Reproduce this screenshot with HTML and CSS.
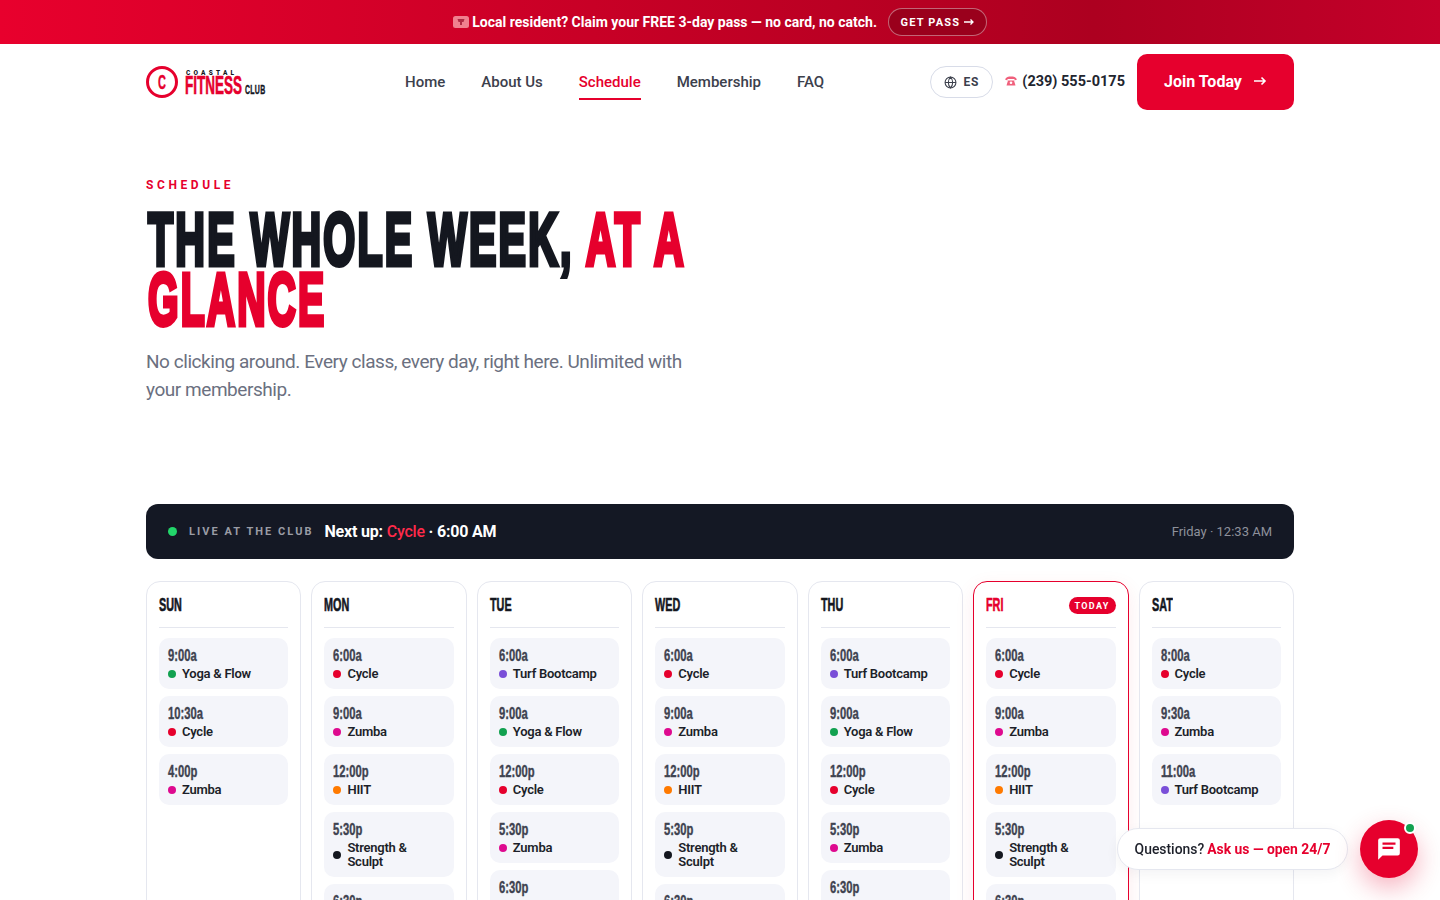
FILE: index.html
```html
<!DOCTYPE html>
<html lang="en">
<head>
<meta charset="utf-8">
<title>Schedule · Coastal Fitness Club</title>
<link rel="stylesheet" href="styles.css">
</head>
<body>
<div class="page">
  <div class="topbar">
    <svg class="ticket" width="16" height="12" viewBox="0 0 16 12"><rect width="16" height="12" rx="2.5" fill="#f0808f"/><path d="M4.500 3h7l-1 3h-5zM7 6h2v3H7z" fill="#b02a44"/></svg>
    <span class="topbar-text">Local resident? Claim your FREE 3-day pass — no card, no catch.</span>
    <a class="pass-btn">GET PASS <svg width="10" height="8" viewBox="0 0 10 8" fill="none" stroke="#fff" stroke-width="1.300"><path d="M0 4h9M6.500 1.500 9 4 6.500 6.500"/></svg></a>
  </div>
  <header class="header">
    <a class="logo">
      <span class="logo-mark"><span class="cond logo-c">C</span></span>
      <span class="logo-words">
        <span class="logo-coastal">COASTAL</span>
        <span class="logo-row"><span class="cond logo-fitness">FITNESS</span><span class="cond logo-club">CLUB</span></span>
      </span>
    </a>
    <nav class="nav">
      <a>Home</a><a>About Us</a><a class="active">Schedule</a><a>Membership</a><a>FAQ</a>
    </nav>
    <div class="header-right">
      <a class="lang">
        <svg width="13" height="13" viewBox="0 0 24 24" fill="none" stroke="#3c404c" stroke-width="2"><circle cx="12" cy="12" r="10"/><path d="M2 12h20M12 2c3 3 4 6.500 4 10s-1 7-4 10c-3-3-4-6.500-4-10s1-7 4-10z"/></svg>
        ES
      </a>
      <a class="phone">
        <svg width="12" height="10" viewBox="0 0 12 10"><path d="M0 3.500C1 1 3.500 .5 6 .5s5 .5 6 3L9.500 4.500V3h-7v1.500zM3 4.500h6L10.500 9.500h-9z" fill="#f0607c"/><circle cx="6" cy="6.700" r="1.300" fill="#fff"/></svg>
        (239) 555-0175
      </a>
      <a class="join">Join Today <svg width="14" height="10" viewBox="0 0 14 10" fill="none" stroke="#fff" stroke-width="1.600"><path d="M1 5h11M8.500 1.500 12 5 8.500 8.500"/></svg></a>
    </div>
  </header>
  <main class="main">
    <section class="hero">
      <p class="eyebrow">SCHEDULE</p>
      <h1 class="title"><span class="title-line">THE WHOLE WEEK, <em>AT A</em></span><span class="title-line title-short"><em>GLANCE</em></span></h1>
      <p class="lead">No clicking around. Every class, every day, right here. Unlimited with your membership.</p>
    </section>
    <section class="live">
      <span class="live-dot"></span>
      <span class="live-label">LIVE AT THE CLUB</span>
      <span class="live-next">Next up: <b>Cycle</b> · 6:00 AM</span>
      <span class="live-time">Friday · 12:33 AM</span>
    </section>
    <section class="week">
      <article class="day">
        <h2 class="day-head"><span class="cond day-name">SUN</span></h2>
        <div class="slot"><span class="cond time">9:00a</span><span class="cls"><i class="dot green"></i>Yoga &amp; Flow</span></div>
        <div class="slot"><span class="cond time">10:30a</span><span class="cls"><i class="dot red"></i>Cycle</span></div>
        <div class="slot"><span class="cond time">4:00p</span><span class="cls"><i class="dot pink"></i>Zumba</span></div>
      </article>
      <article class="day">
        <h2 class="day-head"><span class="cond day-name">MON</span></h2>
        <div class="slot"><span class="cond time">6:00a</span><span class="cls"><i class="dot red"></i>Cycle</span></div>
        <div class="slot"><span class="cond time">9:00a</span><span class="cls"><i class="dot pink"></i>Zumba</span></div>
        <div class="slot"><span class="cond time">12:00p</span><span class="cls"><i class="dot orange"></i>HIIT</span></div>
        <div class="slot"><span class="cond time">5:30p</span><span class="cls"><i class="dot ink"></i>Strength &amp; Sculpt</span></div>
        <div class="slot"><span class="cond time">6:30p</span><span class="cls"><i class="dot red"></i>Cycle</span></div>
      </article>
      <article class="day">
        <h2 class="day-head"><span class="cond day-name">TUE</span></h2>
        <div class="slot"><span class="cond time">6:00a</span><span class="cls"><i class="dot purple"></i>Turf Bootcamp</span></div>
        <div class="slot"><span class="cond time">9:00a</span><span class="cls"><i class="dot green"></i>Yoga &amp; Flow</span></div>
        <div class="slot"><span class="cond time">12:00p</span><span class="cls"><i class="dot red"></i>Cycle</span></div>
        <div class="slot"><span class="cond time">5:30p</span><span class="cls"><i class="dot pink"></i>Zumba</span></div>
        <div class="slot"><span class="cond time">6:30p</span><span class="cls"><i class="dot orange"></i>HIIT</span></div>
      </article>
      <article class="day">
        <h2 class="day-head"><span class="cond day-name">WED</span></h2>
        <div class="slot"><span class="cond time">6:00a</span><span class="cls"><i class="dot red"></i>Cycle</span></div>
        <div class="slot"><span class="cond time">9:00a</span><span class="cls"><i class="dot pink"></i>Zumba</span></div>
        <div class="slot"><span class="cond time">12:00p</span><span class="cls"><i class="dot orange"></i>HIIT</span></div>
        <div class="slot"><span class="cond time">5:30p</span><span class="cls"><i class="dot ink"></i>Strength &amp; Sculpt</span></div>
        <div class="slot"><span class="cond time">6:30p</span><span class="cls"><i class="dot red"></i>Cycle</span></div>
      </article>
      <article class="day">
        <h2 class="day-head"><span class="cond day-name">THU</span></h2>
        <div class="slot"><span class="cond time">6:00a</span><span class="cls"><i class="dot purple"></i>Turf Bootcamp</span></div>
        <div class="slot"><span class="cond time">9:00a</span><span class="cls"><i class="dot green"></i>Yoga &amp; Flow</span></div>
        <div class="slot"><span class="cond time">12:00p</span><span class="cls"><i class="dot red"></i>Cycle</span></div>
        <div class="slot"><span class="cond time">5:30p</span><span class="cls"><i class="dot pink"></i>Zumba</span></div>
        <div class="slot"><span class="cond time">6:30p</span><span class="cls"><i class="dot orange"></i>HIIT</span></div>
      </article>
      <article class="day today">
        <h2 class="day-head"><span class="cond day-name">FRI</span><span class="badge">TODAY</span></h2>
        <div class="slot"><span class="cond time">6:00a</span><span class="cls"><i class="dot red"></i>Cycle</span></div>
        <div class="slot"><span class="cond time">9:00a</span><span class="cls"><i class="dot pink"></i>Zumba</span></div>
        <div class="slot"><span class="cond time">12:00p</span><span class="cls"><i class="dot orange"></i>HIIT</span></div>
        <div class="slot"><span class="cond time">5:30p</span><span class="cls"><i class="dot ink"></i>Strength &amp; Sculpt</span></div>
        <div class="slot"><span class="cond time">6:30p</span><span class="cls"><i class="dot red"></i>Cycle</span></div>
      </article>
      <article class="day">
        <h2 class="day-head"><span class="cond day-name">SAT</span></h2>
        <div class="slot"><span class="cond time">8:00a</span><span class="cls"><i class="dot red"></i>Cycle</span></div>
        <div class="slot"><span class="cond time">9:30a</span><span class="cls"><i class="dot pink"></i>Zumba</span></div>
        <div class="slot"><span class="cond time">11:00a</span><span class="cls"><i class="dot purple"></i>Turf Bootcamp</span></div>
      </article>
    </section>
  </main>
</div>
<a class="chat-bubble">Questions? <b>Ask us — open 24/7</b></a>
<a class="chat-btn">
  <svg width="26" height="26" viewBox="0 0 24 24" fill="#fff"><path d="M20 2H4a2 2 0 0 0-2 2v18l4-4h14a2 2 0 0 0 2-2V4a2 2 0 0 0-2-2zM6 6h12v2H6zm0 4h10v2H6z" fill-rule="evenodd"/></svg>
  <span class="chat-online"></span>
</a>
</body>
</html>
```
FILE: styles.css
```css
* { box-sizing: border-box; }
html, body { margin: 0; padding: 0; background: #fff; }
body { font-family: Roboto, "Liberation Sans", Arial, sans-serif; color: #14171f; }
.page { height: 900px; overflow: hidden; }
a { color: inherit; text-decoration: none; }
em { font-style: normal; color: #e6002d; }
.cond { display: inline-block; white-space: nowrap; font-family: "Liberation Sans", sans-serif; font-weight: 700; transform-origin: left center; -webkit-text-stroke: .4px currentColor; }

.topbar { height: 44px; display: flex; align-items: center; justify-content: center; gap: 11px; color: #fff; font-size: 14px; font-weight: 700; background: linear-gradient(90deg, #e8002d 0%, #ad0020 76%, #c4002a 100%); }
.ticket { margin-right: -8px; }
.pass-btn { height: 28px; padding: 0 11.5px; display: flex; align-items: center; gap: 4px; border: 1px solid rgba(255,255,255,.4); border-radius: 14px; background: #9a001c; font-size: 11px; letter-spacing: 1.2px; }

.header { width: 1148px; margin: 0 auto; height: 76px; display: flex; align-items: center; }
.logo { display: flex; align-items: center; gap: 7px; width: 120px; flex: none; }
.logo-mark { flex: none; width: 32px; height: 32px; border: 3px solid #e6002d; border-radius: 50%; display: flex; align-items: center; justify-content: center; }
.logo-c { color: #e6002d; font-size: 20px; line-height: 1; width: 8px; transform: scaleX(.55); }
.logo-words { display: flex; flex-direction: column; }
.logo-coastal { font-size: 6.500px; font-weight: 900; letter-spacing: 3.200px; line-height: 6px; margin-left: 1px; white-space: nowrap; color: #14171f; }
.logo-row { display: flex; align-items: flex-end; gap: 3px; }
.logo-fitness { color: #e6002d; font-size: 25px; line-height: 19px; width: 57px; transform: scaleX(.54); -webkit-text-stroke: .6px currentColor; }
.logo-club { font-size: 12px; line-height: 10px; width: 21px; letter-spacing: .5px; transform: scaleX(.58); -webkit-text-stroke: .4px currentColor; }
.nav { margin-left: 139px; display: flex; gap: 36px; font-size: 15px; font-weight: 500; color: #3c404c; }
.nav a { padding: 9px 0 7px; border-bottom: 2px solid transparent; }
.nav a.active { color: #e6002d; border-bottom-color: #e6002d; }
.header-right { margin-left: auto; display: flex; align-items: center; gap: 12px; }
.lang { width: 63px; height: 32px; border: 1px solid #d8dce8; border-radius: 16px; display: flex; align-items: center; justify-content: center; gap: 6px; font-size: 12px; font-weight: 700; letter-spacing: .8px; color: #3c404c; }
.phone { display: flex; align-items: center; gap: 5px; font-size: 14.5px; font-weight: 700; color: #22252f; padding-bottom: 2px; }
.join { width: 157px; height: 56px; padding-bottom: 2px; background: #e6002d; border-radius: 10px; color: #fff; font-size: 16px; font-weight: 700; display: flex; align-items: center; justify-content: center; gap: 11px; }

.main { width: 1148px; margin: 0 auto; }
.hero { padding-top: 58px; }
.eyebrow { margin: 0; font-size: 12px; font-weight: 700; letter-spacing: 3.600px; color: #e6002d; line-height: 14px; }
.title { margin: 18px 0 0; padding-left: 2px; font-family: "Liberation Sans", sans-serif; font-weight: 700; font-size: 74px; line-height: 60px; letter-spacing: 4px; color: #14171f; -webkit-text-stroke: 5px currentColor; }
.title em { -webkit-text-stroke-color: #e6002d; }
.title-line { display: block; white-space: nowrap; transform: scaleX(.555); transform-origin: left center; }
.title-short { transform: scaleX(.53); }
.lead { margin: 18px 0 0; width: 560px; font-size: 19px; letter-spacing: -.45px; line-height: 28px; color: #6b7080; }

.live { margin-top: 100px; height: 55px; border-radius: 12px; background: #141824; display: flex; align-items: center; padding: 0 22px; }
.live-dot { width: 9px; height: 9px; border-radius: 50%; background: #22d56a; margin-right: 12px; }
.live-label { font-size: 11px; font-weight: 700; letter-spacing: 2.05px; color: #9a9ca5; margin-right: 11px; }
.live-next { font-size: 16px; letter-spacing: -.2px; font-weight: 700; color: #fff; }
.live-next b { color: #ff2a4a; font-weight: 500; }
.live-time { margin-left: auto; font-size: 13px; color: #8e919b; }

.week { margin-top: 22px; display: grid; grid-template-columns: repeat(7, 1fr); gap: 10px; align-items: start; }
.day { border: 1.5px solid #e5e7ef; border-radius: 14px; padding: 12px; background: #fff; min-height: 420px; display: flex; flex-direction: column; gap: 7px; }
.day.today { border-color: #e6002d; box-shadow: 0 6px 20px rgba(230,0,45,.08); }
.day-head { margin: 0 0 3px; height: 34px; padding-bottom: 10px; border-bottom: 1.5px solid #e5e7ef; display: flex; align-items: center; justify-content: space-between; font-size: 16px; }
.day-name { font-size: 18px; width: 36px; transform: scaleX(.6); -webkit-text-stroke: .6px currentColor; }
.today .day-name { color: #e6002d; }
.badge { height: 17px; padding: 0 6px; border-radius: 9px; background: #e6002d; color: #fff; font-size: 9px; font-weight: 700; letter-spacing: 1.300px; display: flex; align-items: center; }
.slot { padding: 8px 9px; border-radius: 10px; background: #f4f5fa; display: flex; flex-direction: column; gap: 3px; }
.time { font-size: 16.5px; line-height: 18px; color: #3f4350; transform: scaleX(.68); }
.cls { display: flex; align-items: center; gap: 6px; font-size: 13px; font-weight: 600; letter-spacing: -.25px; line-height: 14px; color: #1c1f29; }
.dot { flex: none; width: 8px; height: 8px; border-radius: 50%; }
.green { background: #12a150; }
.red { background: #e6002d; }
.pink { background: #de0a8f; }
.orange { background: #ff7a00; }
.ink { background: #14171f; }
.purple { background: #7a4fd8; }

.chat-bubble { position: fixed; left: 1117px; top: 828px; width: 231px; height: 42px; border: 1px solid #e5e7ef; border-radius: 21px; background: #fff; display: flex; align-items: center; justify-content: center; gap: 3px; font-size: 13.9px; font-weight: 500; color: #1c1f29; box-shadow: 0 4px 14px rgba(20,24,36,.05); }
.chat-bubble b { color: #e6002d; font-weight: 700; }
.chat-btn { position: fixed; left: 1360px; top: 820px; width: 58px; height: 58px; border-radius: 50%; background: #e6002d; display: flex; align-items: center; justify-content: center; box-shadow: 0 10px 26px rgba(230,0,45,.3); }
.chat-online { position: absolute; right: 2px; top: 2px; width: 12px; height: 12px; border-radius: 50%; background: #12a150; border: 2px solid #fff; }
```
